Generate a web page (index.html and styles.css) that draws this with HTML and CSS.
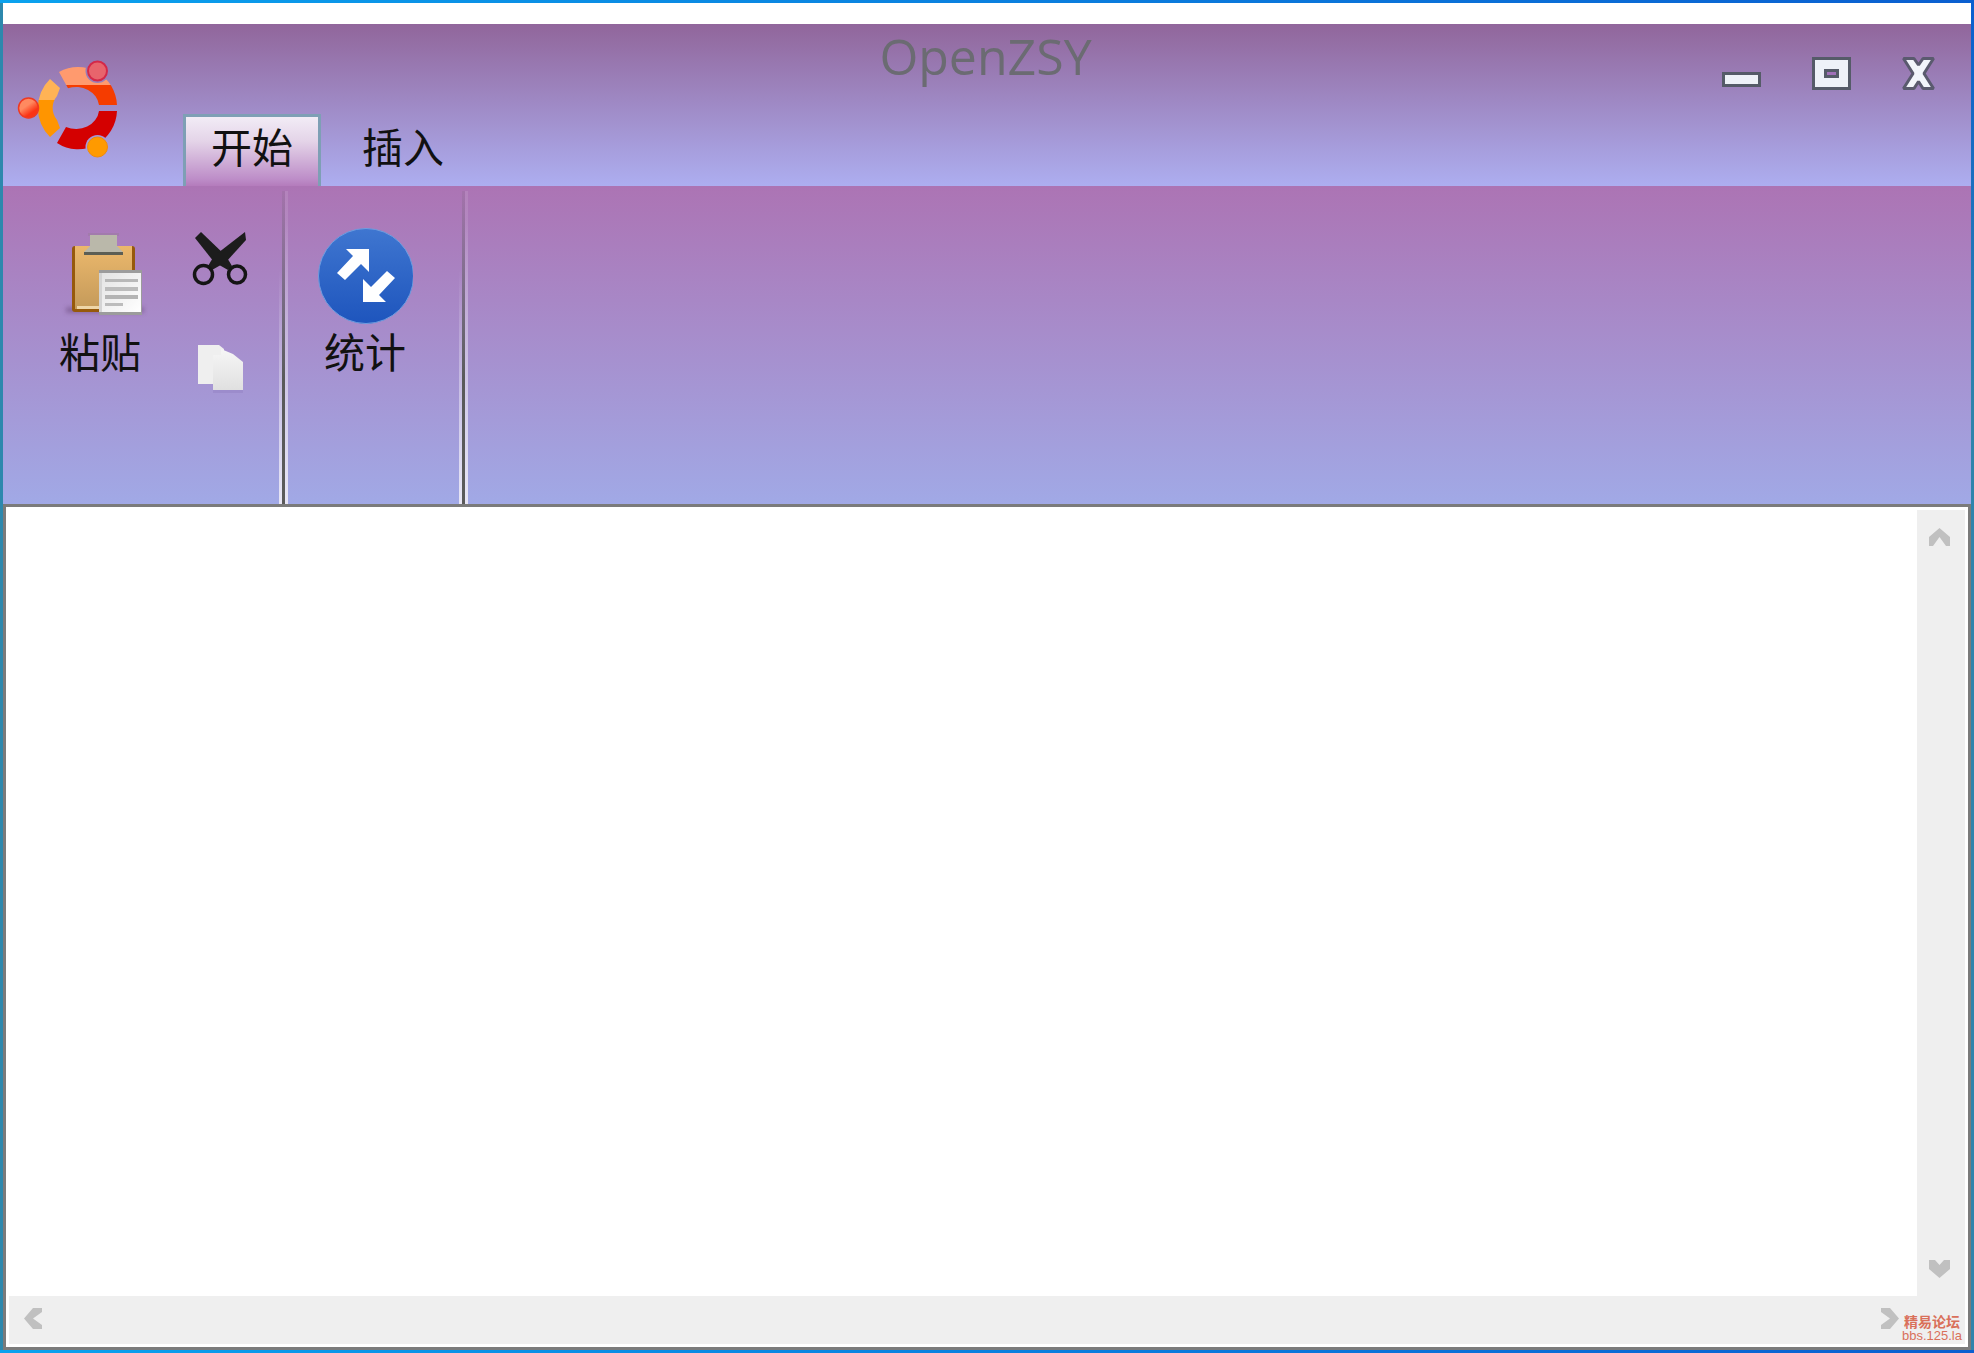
FILE: index.html
```html
<!DOCTYPE html>
<html lang="zh-CN">
<head>
    <meta charset="UTF-8">
    <title>OpenZSY</title>
    <link rel="stylesheet" href="styles.css">
</head>
<body>

<div class="window">
    <div class="top-strip"></div>

    <div class="titlebar">
        <div class="title-left">
            <svg class="logo" width="110" height="104" viewBox="14 54 110 104">
                <defs>
                    <linearGradient id="segTop" x1="0" y1="0" x2="0" y2="1">
                        <stop offset="0.48" stop-color="#ff9a6e"/>
                        <stop offset="0.48" stop-color="#f53c00"/>
                    </linearGradient>
                    <linearGradient id="segLeft" x1="0" y1="0" x2="0" y2="1">
                        <stop offset="0.36" stop-color="#ffb355"/>
                        <stop offset="0.36" stop-color="#ff9500"/>
                    </linearGradient>
                    <linearGradient id="dotLeft" x1="0" y1="0" x2="0.7" y2="1">
                        <stop offset="0.45" stop-color="#ff8a60"/>
                        <stop offset="0.8" stop-color="#fb3414"/>
                    </linearGradient>
                    <mask id="ringCut">
                        <rect x="14" y="54" width="110" height="104" fill="#fff"/>
                        <circle cx="97.5" cy="71" r="12" fill="#000"/>
                        <circle cx="97.5" cy="147" r="12" fill="#000"/>
                    </mask>
                </defs>
                <g mask="url(#ringCut)">
                    <path d="M59 72 A39 40 0 0 1 117 105 L99 105 A23 20.5 0 0 0 68 88.3 Z" fill="url(#segTop)"/>
                    <path d="M117 111 A39 40 0 0 1 57 143 L66 127 A23 20.5 0 0 0 99 111 Z" fill="#d40000"/>
                    <path d="M50 79 A39 40 0 0 0 50 137 L60 128 L57 120 A23 20.5 0 0 1 57 96 L60 88 Z" fill="url(#segLeft)"/>
                </g>
                <circle cx="97.5" cy="71" r="9.5" fill="#e8646c" stroke="#d42848" stroke-width="2"/>
                <circle cx="28.5" cy="108" r="10" fill="url(#dotLeft)" stroke="#ee3a22" stroke-width="1.5"/>
                <circle cx="97.5" cy="147" r="10" fill="#ff9a00" stroke="#f28a08" stroke-width="1"/>
            </svg>
            <div class="tabs">
                <div class="tab tab-active">开始</div>
                <div class="tab">插入</div>
            </div>
        </div>

        <div class="app-title">OpenZSY</div>

        <div class="win-btns">
            <div class="btn-min"></div>
            <div class="btn-max"><span></span></div>
            <svg class="btn-close" width="33" height="33" viewBox="0 0 33 33">
                <path d="M1.5 1.5 H12 L16.5 8 L21 1.5 H31.5 L22 16.5 L31.5 31.5 H21 L16.5 24.5 L12 31.5 H1.5 L11 16.5 Z" fill="#f2f5fb" stroke="#5a5a6e" stroke-width="3" stroke-linejoin="bevel"/>
            </svg>
        </div>
    </div>

    <div class="ribbon">
        <div class="group group-clipboard">
            <div class="big-btn">
                <svg width="96" height="96" viewBox="52 228 96 96">
                    <defs>
                        <linearGradient id="board" x1="0" y1="0" x2="0" y2="1">
                            <stop offset="0" stop-color="#ecb86c"/>
                            <stop offset="1" stop-color="#c49a5a"/>
                        </linearGradient>
                        <linearGradient id="sheet" x1="0" y1="0" x2="1" y2="1">
                            <stop offset="0" stop-color="#e4e4e4"/>
                            <stop offset="1" stop-color="#ffffff"/>
                        </linearGradient>
                        <filter id="soft" x="-20%" y="-100%" width="140%" height="300%">
                            <feGaussianBlur stdDeviation="2"/>
                        </filter>
                    </defs>
                    <rect x="66" y="307" width="78" height="6" fill="#6a4a7a" opacity="0.5" filter="url(#soft)"/>
                    <rect x="72" y="246" width="63" height="66" rx="3" fill="#96590c"/>
                    <rect x="75" y="246" width="57" height="63" fill="url(#board)"/>
                    <rect x="77" y="306" width="40" height="3" fill="#eed6a8"/>
                    <rect x="88" y="233" width="31" height="3" fill="#9a7a9e" opacity="0.5"/>
                    <path d="M90 235 H117 V246 L123 252 H84 L90 246 Z" fill="#bab8aa"/>
                    <path d="M84 252 H123 V255 H84 Z" fill="#5c5e54"/>
                    <rect x="99" y="270" width="43" height="45" fill="#9c9c9c"/>
                    <rect x="99" y="273" width="3" height="39" fill="#d4d4d4"/>
                    <rect x="102" y="273" width="39" height="39" fill="url(#sheet)"/>
                    <rect x="105" y="279" width="33" height="3" fill="#b8b8b8"/>
                    <rect x="105" y="287" width="33" height="4" fill="#bcbcbc"/>
                    <rect x="105" y="295" width="33" height="4" fill="#b4b4b4"/>
                    <rect x="105" y="303" width="18" height="3" fill="#bcbcbc"/>
                </svg>
                <div class="btn-label">粘贴</div>
            </div>
            <div class="small-btns">
                <svg width="60" height="60" viewBox="190 228 60 60">
                    <path d="M195 238 L201 232 L226 256 L232 266 L228 270 L214 262 Z" fill="#1c1c1c"/>
                    <path d="M245 232 L246 240 L226 262 L212 270 L208 266 L214 256 Z" fill="#1c1c1c"/>
                    <circle cx="203.5" cy="274.5" r="9" stroke="#151515" stroke-width="3.5" fill="none"/>
                    <circle cx="237" cy="274.5" r="8.5" stroke="#151515" stroke-width="3.5" fill="none"/>
                </svg>
                <svg width="60" height="60" viewBox="190 340 60 60">
                    <defs>
                        <linearGradient id="page" x1="0" y1="0" x2="0" y2="1">
                            <stop offset="0" stop-color="#f6f6f6"/>
                            <stop offset="1" stop-color="#e0e0e0"/>
                        </linearGradient>
                    </defs>
                    <rect x="213" y="390" width="30" height="3" fill="#9c8ccc"/>
                    <path d="M198 345 H219 L224 349 L224 384 H198 Z" fill="#efefef"/>
                    <path d="M213 355 H221 V349 L233 354 L243 362 V390 H213 Z" fill="url(#page)"/>
                </svg>
            </div>
        </div>
        <div class="sep"></div>

        <div class="group group-stats">
            <div class="big-btn">
                <svg width="96" height="96" viewBox="317 228 96 96">
                    <defs>
                        <linearGradient id="ball" x1="0" y1="0" x2="0" y2="1">
                            <stop offset="0" stop-color="#3f76d0"/>
                            <stop offset="1" stop-color="#1e55bd"/>
                        </linearGradient>
                    </defs>
                    <circle cx="366" cy="276" r="47.5" fill="url(#ball)" stroke="#6f9ee0" stroke-width="1"/>
                    <path d="M346 249 H369 V272 L361 264 L345 280 L337 273 L353 256 Z" fill="#fff"/>
                    <path d="M386 302 H363 V279 L371 287 L387 271 L395 278 L379 295 Z" fill="#fff"/>
                </svg>
                <div class="btn-label">统计</div>
            </div>
        </div>
        <div class="sep"></div>
    </div>

    <div class="editor">
        <div class="edit-row">
            <div class="edit-area"></div>
            <div class="vscroll">
                <svg class="arrow" width="21" height="18" viewBox="0 0 21 18">
                    <path d="M10.5 0 L21 9 V18 H17 L10.5 9 L4 18 H0 V9 Z" fill="#c0c0c0"/>
                </svg>
                <svg class="arrow" width="21" height="18" viewBox="0 0 21 18">
                    <path d="M0 0 H6 L10.5 5 L15 0 H21 V9 L10.5 18 L0 9 Z" fill="#c0c0c0"/>
                </svg>
            </div>
        </div>
        <div class="hscroll">
            <svg class="arrow" width="18" height="21" viewBox="0 0 18 21">
                <path d="M0 10.5 L9 0 H18 V4 L9 10.5 L18 17 V21 H9 Z" fill="#c0c0c0"/>
            </svg>
            <svg class="arrow" width="18" height="21" viewBox="0 0 18 21">
                <path d="M0 0 H9 L18 10.5 L9 21 H0 V17 L9 10.5 L0 4 Z" fill="#c0c0c0"/>
            </svg>
            <div class="watermark">
                <div class="wm-cn">精易论坛</div>
                <div class="wm-en">bbs.125.la</div>
            </div>
        </div>
    </div>
</div>

</body>
</html>
```

FILE: styles.css
```css
html, body {
    margin: 0;
    padding: 0;
    background-color: #ffffff;
}

body {
    font-family: "Noto Sans CJK SC", "Liberation Sans", sans-serif;
    overflow: hidden;
}

svg {
    display: block;
}

.window {
    box-sizing: border-box;
    width: 1974px;
    height: 1353px;
    padding: 3px;
    display: flex;
    flex-direction: column;
    background:
        linear-gradient(90deg, #0aa2ee, #0a5fd0) 0 0 / 100% 3px no-repeat,
        linear-gradient(90deg, #0aa2ee, #0a5fd0) 0 100% / 100% 3px no-repeat,
        linear-gradient(180deg, #0a5fd0, #2f84ac 30%) 100% 0 / 3px 100% no-repeat,
        #2d88ad;
}

.top-strip {
    height: 21px;
    background-color: #ffffff;
}

/* title bar */
.titlebar {
    height: 162px;
    display: grid;
    grid-template-columns: 1fr auto 1fr;
    background: linear-gradient(180deg, #91669b, #adaef0);
}

.title-left {
    display: flex;
    align-items: flex-end;
}

.logo {
    align-self: flex-start;
    margin: 30px 0 0 11px;
}

.tabs {
    display: flex;
    margin-left: 59px;
}

.tab {
    box-sizing: border-box;
    width: 138px;
    height: 72px;
    padding-top: 4px;
    border: 3px solid transparent;
    border-bottom: none;
    text-align: center;
    font-size: 41px;
    line-height: 48px;
    color: #111111;
}

.tab + .tab {
    margin-left: 13px;
}

.tab-active {
    border-color: #7e9fb5;
    background: linear-gradient(180deg, #f2ecf6, #e4d4e8 35%, #bd8dc8 90%, #b47cbc);
}

.app-title {
    margin: -2px 0 0 -3px;
    font-family: "Open Sans", sans-serif;
    font-size: 50px;
    line-height: 68px;
    color: #6b6b72;
}

.win-btns {
    display: flex;
    justify-content: flex-end;
    align-items: flex-start;
    gap: 51px;
    padding: 33px 36px 0 0;
}

.btn-min {
    box-sizing: border-box;
    width: 39px;
    height: 15px;
    margin-top: 15px;
    border: 3px solid #555b68;
    background-color: #eef2f8;
}

.btn-max {
    box-sizing: border-box;
    width: 39px;
    height: 33px;
    border: 3px solid #555b68;
    background-color: #eef2f8;
    display: flex;
    align-items: center;
    justify-content: center;
}

.btn-max span {
    box-sizing: border-box;
    width: 15px;
    height: 9px;
    border: 3px solid #555b68;
    background-color: #a070b8;
}

/* ribbon */
.ribbon {
    height: 318px;
    display: flex;
    background: linear-gradient(180deg, #ac74b4, #a1a9e6);
}

.group {
    display: flex;
    padding-top: 42px;
}

.group-clipboard {
    width: 276px;
    padding-left: 49px;
    box-sizing: border-box;
}

.group-stats {
    width: 171px;
    padding-left: 29px;
    box-sizing: border-box;
}

.big-btn {
    width: 96px;
    display: flex;
    flex-direction: column;
    align-items: center;
}

.btn-label {
    margin-top: 2px;
    font-size: 41px;
    line-height: 48px;
    white-space: nowrap;
    color: #111111;
}

.small-btns {
    margin-left: 42px;
    display: flex;
    flex-direction: column;
    gap: 52px;
}

.sep {
    width: 9px;
    margin-top: 5px;
    background:
        linear-gradient(180deg, rgba(255, 255, 255, 0) 25%, rgba(240, 236, 246, 0.9)) 0 0 / 3px 100% no-repeat,
        linear-gradient(180deg, rgba(90, 90, 90, 0.1), #5a5a5a 60%) 3px 0 / 3px 100% no-repeat,
        linear-gradient(180deg, rgba(255, 255, 255, 0.1) 10%, rgba(240, 236, 246, 0.9)) 6px 0 / 3px 100% no-repeat;
}

/* text area and scrollbars */
.editor {
    flex: 1;
    box-sizing: border-box;
    border: 3px solid #7b7b7b;
    padding: 3px;
    display: flex;
    flex-direction: column;
    background-color: #ffffff;
}

.edit-row {
    flex: 1;
    display: flex;
}

.edit-area {
    flex: 1;
}

.vscroll {
    box-sizing: border-box;
    width: 48px;
    padding: 18px 3px 18px 0;
    display: flex;
    flex-direction: column;
    justify-content: space-between;
    align-items: center;
    background-color: #efefef;
}

.hscroll {
    position: relative;
    box-sizing: border-box;
    height: 48px;
    padding: 0 66px 3px 15px;
    display: flex;
    justify-content: space-between;
    align-items: center;
    background-color: #efefef;
}

.watermark {
    position: absolute;
    right: 3px;
    bottom: 1px;
    text-align: center;
    color: #d9705a;
}

.wm-cn {
    font-size: 14px;
    line-height: 16px;
    font-weight: 700;
}

.wm-en {
    font-family: "Liberation Sans", sans-serif;
    font-size: 13px;
    line-height: 14px;
}
```
